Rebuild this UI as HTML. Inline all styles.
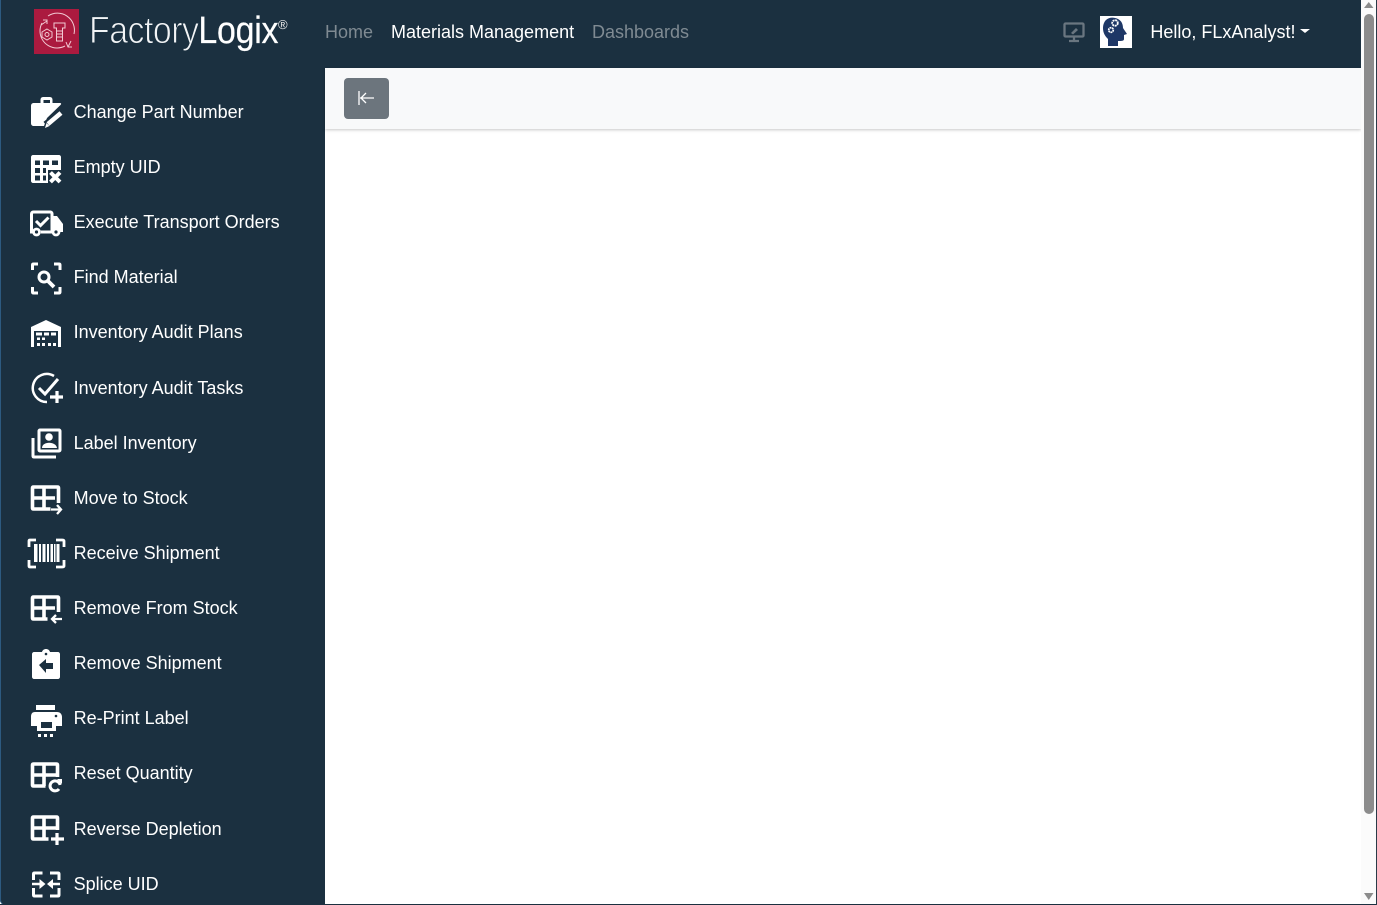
<!DOCTYPE html>
<html><head><meta charset="utf-8"><title>FactoryLogix</title>
<style>
html,body{margin:0;padding:0;width:1377px;height:905px;overflow:hidden;background:#fff;font-family:"Liberation Sans",Arial,sans-serif}
.a{position:absolute}
#side{left:0;top:0;width:325px;height:905px;background:#1b3040;border-bottom-left-radius:5px;box-shadow:inset 1px 0 0 #2d5a80}
#top{left:1px;top:0;width:1360px;height:68px;background:#1b3040}
#sub{left:325px;top:68px;width:1036px;height:61px;background:#f8f9fa;box-shadow:0 1px 3px rgba(0,0,0,.22)}
#btn{left:343.6px;top:77.500px;width:45.800px;height:41.500px;background:#6c757d;border-radius:4px}
.t{position:absolute;white-space:nowrap;font-size:18px;line-height:22px;color:#fff}
.n{left:73.6px}
.g{color:#7f8a92}
#sb{left:1361px;top:0;width:16px;height:905px;background:#fbfbfb}
#th{left:1364px;top:14px;width:9.500px;height:800px;background:#8c8c8c;border-radius:5px}
#edge{left:0;top:904px;width:1377px;height:1px;background:#1b3040}
#edge2{left:1376px;top:0;width:1px;height:905px;background:#2a3a48}
svg{position:absolute;left:0;top:0}
</style></head><body>
<div class="a" id="side"></div>
<div class="a" id="top"></div>
<div class="a" id="sub"></div>
<div class="a" id="btn"></div>
<div class="a" id="sb"></div>
<div class="a" id="th"></div>
<div class="a" id="edge"></div>
<div class="a" id="edge2"></div>

<div class="t" style="left:89px;top:8px;font-size:38px;line-height:46px;color:#f2f4f6;letter-spacing:-.6px;transform-origin:0 0;transform:scaleX(.893);-webkit-text-stroke:1px #1b3040">Factory<span style="color:#fff;letter-spacing:-.3px;-webkit-text-stroke:.2px #fff">Logix</span></div>
<div class="t" style="left:278px;top:18px;font-size:13px;line-height:14px;color:#eee">®</div>

<div class="t g" style="left:325px;top:21px">Home</div>
<div class="t" style="left:391px;top:21px">Materials Management</div>
<div class="t g" style="left:592px;top:21px">Dashboards</div>
<div class="t" style="left:1150.400px;top:21px">Hello, FLxAnalyst!</div>

<div class="t n" style="top:101px">Change Part Number</div>
<div class="t n" style="top:156px">Empty UID</div>
<div class="t n" style="top:211px">Execute Transport Orders</div>
<div class="t n" style="top:266px">Find Material</div>
<div class="t n" style="top:321px">Inventory Audit Plans</div>
<div class="t n" style="top:377px">Inventory Audit Tasks</div>
<div class="t n" style="top:432px">Label Inventory</div>
<div class="t n" style="top:487px">Move to Stock</div>
<div class="t n" style="top:542px">Receive Shipment</div>
<div class="t n" style="top:597px">Remove From Stock</div>
<div class="t n" style="top:652px">Remove Shipment</div>
<div class="t n" style="top:707px">Re-Print Label</div>
<div class="t n" style="top:762px">Reset Quantity</div>
<div class="t n" style="top:818px">Reverse Depletion</div>
<div class="t n" style="top:873px">Splice UID</div>

<svg width="1377" height="905" viewBox="0 0 1377 905" fill="none">
<!-- logo -->
<rect x="34" y="9" width="45" height="45" fill="#ab1a3f"/>
<g stroke="#f2c9d3" stroke-width="1">
<path d="M48 16A17 17 0 0 1 74 34M65 46A17 17 0 0 1 40 31A17 17 0 0 1 42 23"/>
<path d="M41 25l6-4M43 20l4 0 0 4M71 41l-3 6M66 42l2 5 4 0"/>
<path d="M54 23h11v5h-2.500v13h-6v-13H54z"/>
<path d="M57 31h5M57 34h5M57 37h5"/>
<path d="M47 29l5 3v5l-5 3-5-3v-5z"/><circle cx="47" cy="34.500" r="2"/>
</g>
<!-- monitor -->
<g stroke="#6a7680" stroke-width="2.300"><rect x="1064.500" y="23.500" width="19" height="13" rx="1"/><path d="M1074 37v3M1069 41h10"/></g>
<path d="M1071 33l5-5 2 2-5 4.500z" fill="#6a7680"/>
<!-- avatar -->
<rect x="1100" y="16" width="32" height="32" fill="#fff"/>
<path d="M1106 20c3-3 8-3 12-1 4 2 5 6 5 9l4 6-3 1v4c0 2-2 2-6 2v5h-10v-7c-3-3-5-6-5-11 0-3 1-6 3-8z" fill="#1e3766"/>
<circle cx="1115" cy="23" r="2.800" fill="#1e3766" stroke="#fff" stroke-width="1.800" stroke-dasharray="2 .6"/>
<circle cx="1111" cy="30" r="2.300" fill="#1e3766" stroke="#fff" stroke-width="1.700" stroke-dasharray="1.800 .5"/>
<!-- caret -->
<path d="M1300 29h10l-5 4z" fill="#fff"/>
<!-- back btn -->
<g stroke="#fff" stroke-width="1.300"><path d="M359 91v14M374 98h-14M366 93l-5 5 5 5"/></g>

<!-- scrollbar arrows -->
<path d="M1364 8l4.750-6 4.750 6z" fill="#8c8c8c"/><path d="M1364 893l4.750 7 4.750-7z" fill="#8c8c8c"/>

<g fill="#fff" stroke="#fff">
<!-- 1 change part -->
<path stroke="none" fill-rule="evenodd" d="M34 103h6.500v-3c0-2 1-3 3-3h6c2 0 3 1 3 3v3h7c2 0 2 1 1 2L47 118l-3 8H34c-2 0-3-1-3-3v-17c0-2 1-3 3-3zM43.500 100v3h6.500v-3z"/>
<path fill="none" stroke="#1b3040" stroke-width="8" d="M46 125l15-12"/>
<path fill="none" stroke-width="4.500" d="M48 124l13-11"/>
<path stroke="none" d="M45 128l1.500-5 3 3z"/>
<!-- 2 empty uid -->
<path stroke="none" fill-rule="evenodd" d="M33 155h26c1 0 2 1 2 2v13H48v13H33c-1 0-2-1-2-2v-24c0-1 1-2 2-2zM35 160.500v4.500h5v-4.500zM43 160.500v4.500h6v-4.500zM52 160.500v4.500h6v-4.500zM35 168v5h5v-5zM43 168v5h3v-5zM35 175.500v5h5v-5zM43 175.500v5h3v-5z"/>
<path fill="none" stroke-width="4" d="M50.500 172.500l9.500 9.500M60 172.500L50.500 182"/>
<!-- 3 truck -->
<path fill="none" stroke-width="3" d="M33 232h-1.500v-18c0-1 .5-2 2-2h17c1 0 1.500 1 1.500 2v18H41"/>
<path fill="none" stroke-width="3" d="M36 221l4.500 4.500 8-8"/>
<path stroke="none" d="M52 216h5l6 8v8h-3c-1-4-7-4-8 0z"/>
<circle cx="36.500" cy="232" r="3" fill="#1b3040" stroke-width="2.800"/><circle cx="56" cy="232" r="3" fill="#1b3040" stroke-width="2.800"/>
<!-- 4 find -->
<path fill="none" stroke-width="3" d="M32.500 270v-5c0-1 0-1 1-1h4.500M54 264h5c1 0 1 0 1 1v5M32.500 287v5c0 1 0 1 1 1h4.500M54 293h5c1 0 1 0 1-1v-5"/>
<circle cx="44" cy="277" r="5" fill="none" stroke-width="3"/><path fill="none" stroke-width="3.800" d="M48 281l6 6"/>
<!-- 5 inventory plans -->
<path stroke="none" d="M46 320l15 7v20h-3v-16H34v16h-3v-20z"/>
<path stroke="none" d="M36 332.500h6v3h-6zM44 332.500h5v3h-5zM51 332.500h5v3h-5z"/>
<g stroke="none"><rect x="37" y="337.500" width="3" height="2.500"/><rect x="42" y="337.500" width="3" height="2.500"/><rect x="37" y="343" width="3" height="3"/><rect x="42" y="343" width="3" height="3"/><rect x="48" y="343" width="3" height="3"/><rect x="53" y="343" width="3" height="3"/></g>
<!-- 6 audit tasks -->
<path fill="none" stroke-width="2.500" d="M54 376A14 14 0 1 0 47 402"/>
<path fill="none" stroke-width="3" d="M39 388l6 6 13-15"/>
<path fill="none" stroke-width="3.200" d="M57 391v12M50 397h13"/>
<!-- 7 label -->
<path fill="none" stroke-width="3" d="M33 438v18c0 1 0 1 1 1h22"/>
<rect x="39" y="430" width="21" height="21" rx="1" fill="none" stroke-width="3"/>
<circle cx="49" cy="437" r="3.800" stroke="none"/><path stroke="none" d="M42 448c0-7 14-7 15 0z"/>
<!-- 8 move to stock -->
<path fill="none" stroke-width="3.600" d="M58.500 503v-15c0-1 0-1-1-1H33.500c-1 0-1 0-1 1v20c0 1 0 1 1 1h17M33 498h22M44 487v22"/>
<path fill="none" stroke-width="2.300" d="M51 509.500h10M57 505l4 4.500-4 4.500"/>
<!-- 9 receive -->
<path fill="none" stroke-width="2.800" d="M36 540h-6c-1 0-1 0-1 1v6M56 540h6c1 0 2 0 2 1v6M29 560v6c0 1 0 1 1 1h6M64 560v6c0 1-1 1-2 1h-6"/>
<path stroke="none" d="M34 544h3.500v18H34zM39 544h2v18h-2zM42.500 544h3v18h-3zM47 544h2v18h-2zM50.500 544h2.500v18h-2.500zM54 544h1.500v18H54zM56.500 544h3v18h-3z"/>
<!-- 10 remove stock -->
<path fill="none" stroke-width="3.600" d="M58.500 612v-14c0-1 0-1-1-1H33.500c-1 0-1 0-1 1v20c0 1 0 1 1 1h14M33 608h22M44 597v22"/>
<path fill="none" stroke-width="2.300" d="M62 619H52M56 615l-4 4 4 4"/>
<!-- 11 remove shipment -->
<path stroke="none" d="M34 652h8c1-4 7-4 8 0h8c1 0 2 1 2 2v23c0 1-1 2-2 2H34c-1 0-2-1-2-2v-23c0-1 1-2 2-2z"/>
<path stroke="none" fill="#1b3040" d="M39 665l7-6v4h7v6h-7v4z"/><circle cx="46" cy="654" r="1.300" stroke="none" fill="#1b3040"/>
<!-- 12 reprint -->
<path stroke="none" d="M36 705h19v5H36z"/>
<path stroke="none" fill-rule="evenodd" d="M35 712h22c3 0 5 2 5 5v9h-6v5H37v-5h-6v-9c0-3 1-5 4-5zM41 722v6h11v-6z"/>
<circle cx="56" cy="716" r="1.300" fill="#1b3040" stroke="none"/>
<path stroke="none" d="M38 734h3v3h-3zM44 734h3v3h-3zM50 734h3v3h-3z"/>
<!-- 13 reset -->
<path fill="none" stroke-width="3.600" d="M57.500 777v-12c0-1 0-1-1-1H33.500c-1 0-1 0-1 1v20c0 1 0 1 1 1h12M33 775h23M44 764v22"/>
<path fill="none" stroke-width="3" d="M60 785a5 5 0 1 0-1 4"/><path stroke="none" d="M57 779h5v5z"/>
<!-- 14 reverse -->
<path fill="none" stroke-width="3.600" d="M57.500 830v-12c0-1 0-1-1-1H33.500c-1 0-1 0-1 1v20c0 1 0 1 1 1h15M33 828h23M44 817v22"/>
<path fill="none" stroke-width="3.200" d="M57 833v12M51 839h13"/>
<!-- 15 splice -->
<path fill="none" stroke-width="3" d="M33.500 880v-6c0-1 0-1 1-1h8M50 873h8c1 0 1 0 1 1v6M33.500 888v7c0 1 0 1 1 1h8M50 896h8c1 0 1 0 1-1v-7"/>
<path fill="none" stroke-width="2.500" d="M32 884h9M60 884h-9"/>
<path stroke="none" d="M45.500 884l-6-5v10zM47 884l6-5v10z"/>
</g>
</svg>
</body></html>
